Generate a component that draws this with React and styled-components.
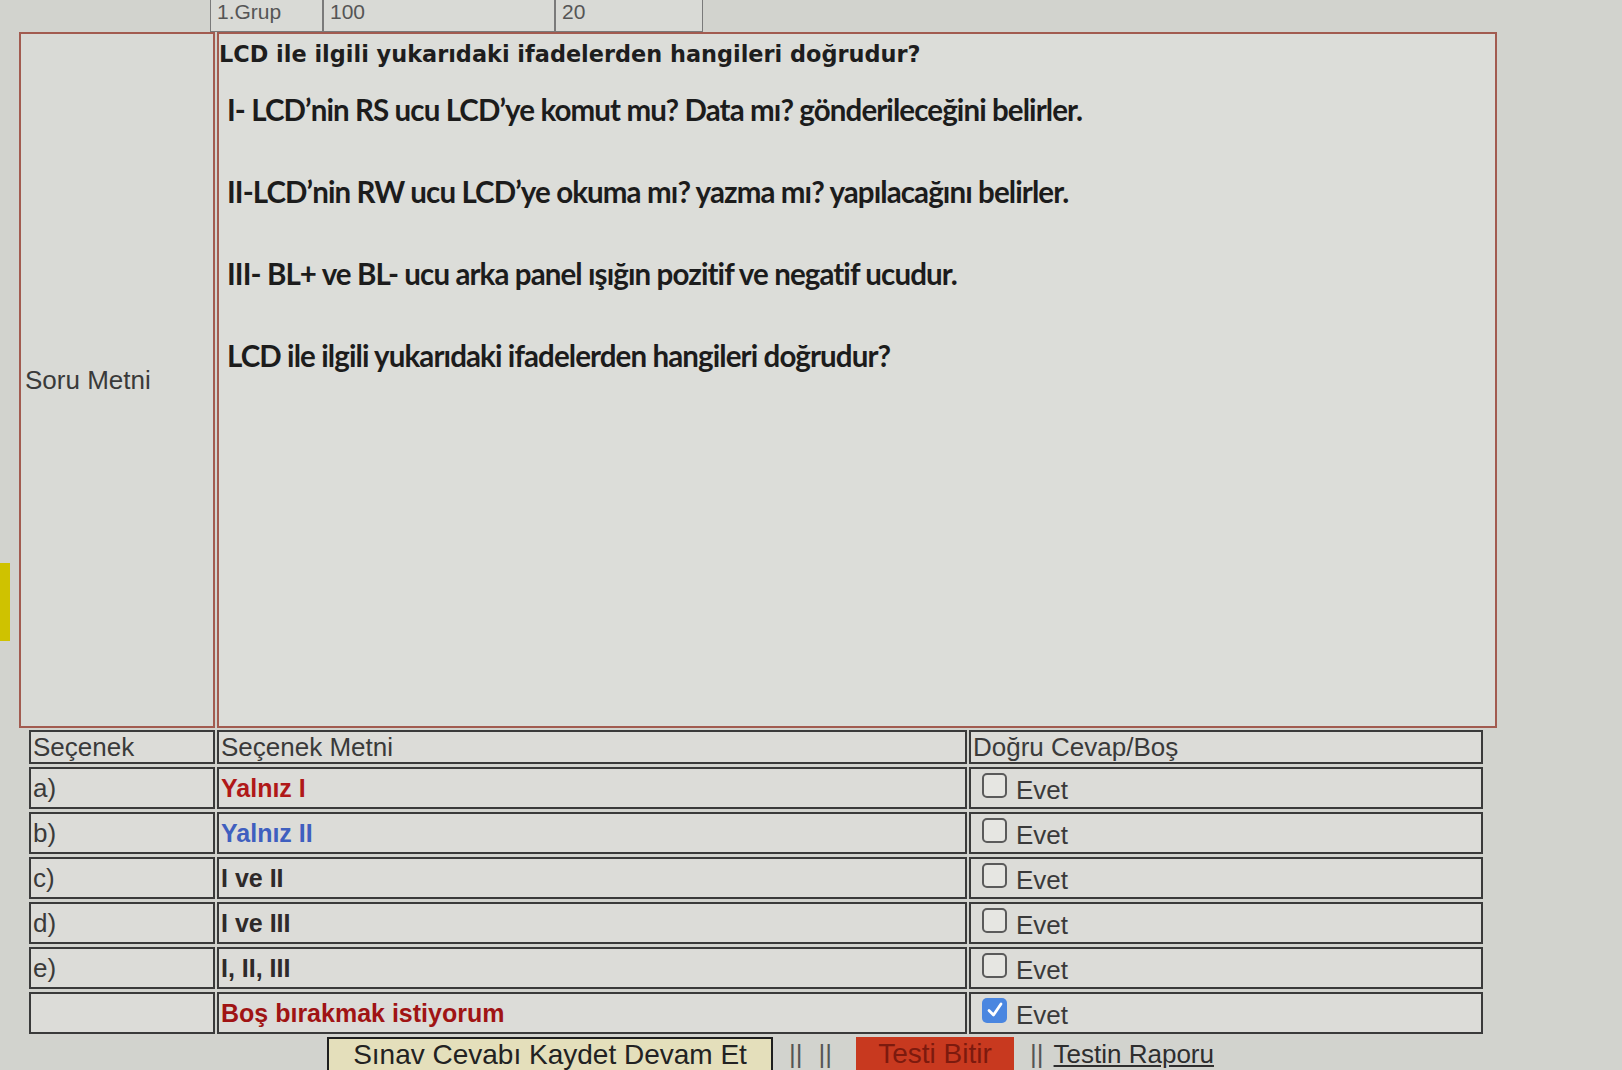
import React from 'react';
import styled, { createGlobalStyle } from 'styled-components';

const GlobalStyle = createGlobalStyle`
html, body {
  margin: 0;
  padding: 0;
  background: #d2d3ce;
  overflow: hidden;
}
body {
  font-family: "Liberation Sans", Arial, sans-serif;
  color: #333;
}
`;

const options = [
  { key: 'a', label: 'a)', text: 'Yalnız I', color: '#b01818', checked: false },
  { key: 'b', label: 'b)', text: 'Yalnız II', color: '#3f5fbf', checked: false },
  { key: 'c', label: 'c)', text: 'I ve II', color: '#2e2a2a', checked: false },
  { key: 'd', label: 'd)', text: 'I ve III', color: '#2e2a2a', checked: false },
  { key: 'e', label: 'e)', text: 'I, II, III', color: '#2e2a2a', checked: false },
  { key: 'bos', label: '', text: 'Boş bırakmak istiyorum', color: '#a01414', checked: true },
];

const lines = [
  'I- LCD’nin RS ucu LCD’ye komut mu? Data mı? gönderileceğini belirler.',
  'II-LCD’nin RW ucu LCD’ye okuma mı? yazma mı? yapılacağını belirler.',
  'III- BL+ ve BL- ucu arka panel ışığın pozitif ve negatif ucudur.',
  'LCD ile ilgili yukarıdaki ifadelerden hangileri doğrudur?',
];

class App extends React.Component {
  render() {
    return (
      <Page>
        <GlobalStyle />
        <Gutter>
          <YellowBar />
        </Gutter>
        <Main>
          <TopRow>
            <TopCell w={113}>1.Grup</TopCell>
            <TopCell w={232}>100</TopCell>
            <TopCell w={148}>20</TopCell>
          </TopRow>

          <QuestionTable>
            <LabelCell>Soru Metni</LabelCell>
            <QuestionCell>
              <QuestionTitle>LCD ile ilgili yukarıdaki ifadelerden hangileri doğrudur?</QuestionTitle>
              <ImageText>
                {lines.map((l) => (
                  <ImageLine key={l}>{l}</ImageLine>
                ))}
              </ImageText>
            </QuestionCell>
          </QuestionTable>

          <OptionsTable>
            <Cell>Seçenek</Cell>
            <Cell>Seçenek Metni</Cell>
            <Cell>Doğru Cevap/Boş</Cell>
            {options.map((o) => (
              <React.Fragment key={o.key}>
                <Cell>{o.label}</Cell>
                <Cell>
                  <OptionText color={o.color}>{o.text}</OptionText>
                </Cell>
                <Cell>
                  <Check checked={o.checked}>
                    {o.checked && (
                      <svg width="20" height="20" viewBox="0 0 20 20">
                        <path d="M4 10.5 L8.5 15 L16 4" fill="none" stroke="#fff" strokeWidth="2.8" strokeLinecap="round" strokeLinejoin="round" />
                      </svg>
                    )}
                  </Check>
                  <Evet>Evet</Evet>
                </Cell>
              </React.Fragment>
            ))}
          </OptionsTable>

          <Actions>
            <SaveButton>Sınav Cevabı Kaydet Devam Et</SaveButton>
            <Sep>||</Sep>
            <Sep>||</Sep>
            <FinishButton>Testi Bitir</FinishButton>
            <Sep>||</Sep>
            <ReportLink>Testin Raporu</ReportLink>
          </Actions>
        </Main>
      </Page>
    );
  }
}
export default App;

const Page = styled.div`
display: flex;
width: 1622px;
height: 1070px;
overflow: hidden;
`;
const Gutter = styled.div`
width: 19px;
flex-shrink: 0;
display: flex;
flex-direction: column;
`;
const YellowBar = styled.div`
flex-shrink: 0;
margin-top: 563px;
width: 10px;
height: 78px;
background: #cfc200;
`;
const Main = styled.div`
flex: 1;
display: flex;
flex-direction: column;
& > * {
  flex-shrink: 0;
}
`;
const TopRow = styled.div`
display: flex;
margin-left: 191px;
height: 32px;
`;
const TopCell = styled.div`
width: ${(p) => p.w}px;
box-sizing: border-box;
border: 1px solid #7a7a7a;
border-top: none;
font-size: 21px;
line-height: 24px;
padding: 0 6px;
color: #555;
background: #d9dad6;
`;
const QuestionTable = styled.div`
display: grid;
grid-template-columns: 196px 1280px;
column-gap: 2px;
height: 696px;
`;
const LabelCell = styled.div`
border: 2px solid #a25b50;
background: #d9dad6;
display: flex;
align-items: center;
padding-left: 4px;
font-size: 26px;
color: #3a3a3a;
`;
const QuestionCell = styled.div`
border: 2px solid #a25b50;
background: #dcddd9;
padding: 5px 0 0 0;
`;
const QuestionTitle = styled.div`
font-family: "DejaVu Sans", Verdana, sans-serif;
font-weight: 700;
font-size: 22.4px;
line-height: 30px;
color: #1e1e1e;
`;
const ImageText = styled.div`
display: flex;
flex-direction: column;
gap: 36px;
margin-top: 18px;
padding-left: 8px;
`;
const ImageLine = styled.div`
font-family: "Lato", "Open Sans", sans-serif;
font-weight: 700;
font-size: 29.5px;
line-height: 46px;
color: #1c1c1c;
letter-spacing: -0.9px;
`;
const OptionsTable = styled.div`
display: grid;
grid-template-columns: 186px 750px 514px;
grid-template-rows: 34px repeat(6, 42px);
gap: 3px 2px;
margin-left: 10px;
margin-top: 2px;
`;
const Cell = styled.div`
box-sizing: border-box;
border: 2px solid #3a3a3a;
background: #dcdcd8;
display: flex;
align-items: center;
padding-left: 2px;
font-size: 26px;
color: #3a3a3a;
`;
const OptionText = styled.span`
font-weight: 700;
font-size: 25px;
color: ${(p) => p.color};
`;
const Check = styled.span`
width: 25px;
height: 25px;
box-sizing: border-box;
border-radius: 5px;
margin: 0 9px 6px 9px;
border: ${(p) => (p.checked ? 'none' : '2px solid #5a5a5a')};
background: ${(p) => (p.checked ? '#4a86e0' : '#e6e6e2')};
display: flex;
align-items: center;
justify-content: center;
`;
const Evet = styled.span`
font-size: 26px;
color: #3a3a3a;
padding-top: 4px;
`;
const Actions = styled.div`
display: flex;
align-items: flex-start;
margin-left: 308px;
margin-top: 3px;
gap: 16px;
height: 34px;
`;
const SaveButton = styled.div`
width: 446px;
height: 40px;
box-sizing: border-box;
border: 2px solid #1e1e1e;
background: #e4dfbb;
display: flex;
align-items: flex-start;
justify-content: center;
font-size: 28px;
line-height: 32px;
color: #222;
`;
const Sep = styled.span`
font-size: 26px;
line-height: 34px;
color: #555;
`;
const FinishButton = styled.div`
width: 158px;
height: 40px;
background: #c8391f;
display: flex;
align-items: flex-start;
justify-content: center;
font-size: 28px;
line-height: 34px;
color: #7c1a0e;
margin-left: 8px;
`;
const ReportLink = styled.a`
font-size: 26px;
line-height: 34px;
color: #2e2e2e;
text-decoration: underline;
margin-left: -6px;
`;
